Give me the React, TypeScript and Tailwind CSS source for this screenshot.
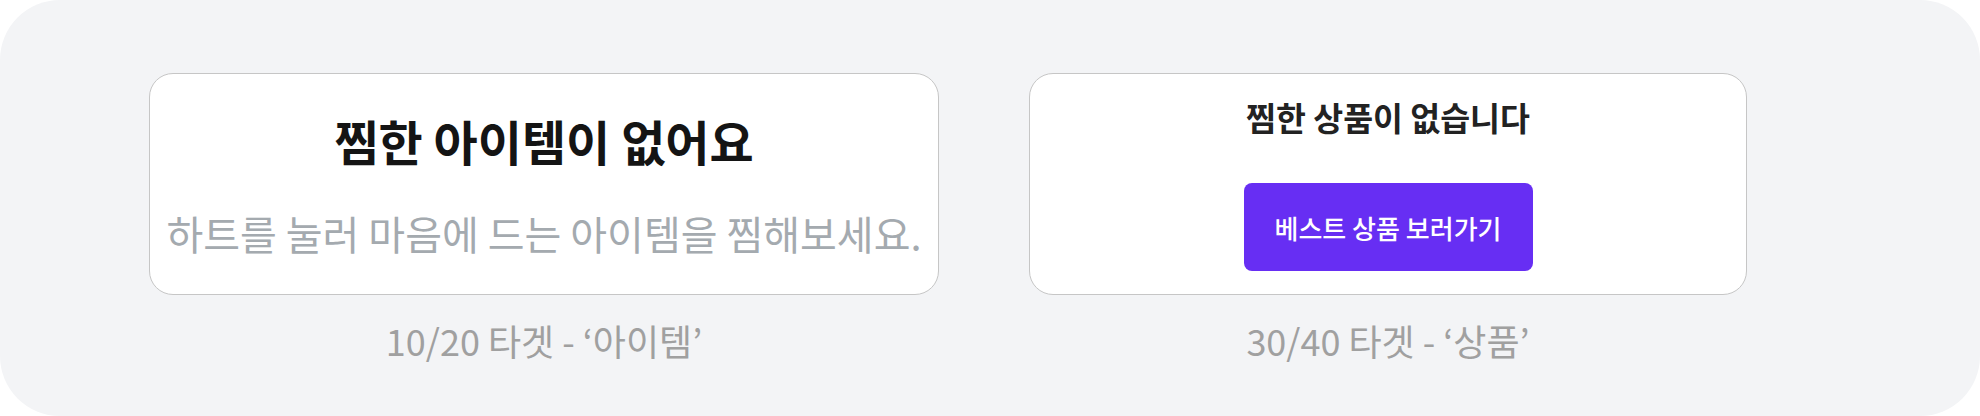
const font = "font-['Noto_Sans_CJK_KR','Noto_Sans',sans-serif]"

function Caption({ children }: { children: React.ReactNode }) {
  return (
    <p className="mt-[22px] text-center text-[36px] leading-[46px] text-[#a0a0a0] whitespace-nowrap">
      {children}
    </p>
  )
}

export default function App() {
  return (
    <div className={`w-[1980px] h-[416px] bg-white ${font}`}>
      <div className="h-full rounded-[60px] bg-[#f3f4f6] flex gap-[90px] pl-[149px] pt-[73px]">
        {/* 10/20 target */}
        <div className="w-[790px] flex flex-col">
          <div className="h-[222px] rounded-[24px] border-[1.5px] border-[#c6c6c6] bg-white flex flex-col items-center justify-center gap-[38px]">
            <h2 className="text-[48px] leading-[60px] font-bold text-[#141414] whitespace-nowrap">찜한 아이템이 없어요</h2>
            <p className="text-[40px] leading-[50px] text-[#a4aaaf] whitespace-nowrap">
              하트를 눌러 마음에 드는 아이템을 찜해보세요.
            </p>
          </div>
          <Caption>10/20 타겟 - ‘아이템’</Caption>
        </div>

        {/* 30/40 target */}
        <div className="w-[718px] flex flex-col">
          <div className="h-[222px] rounded-[24px] border-[1.5px] border-[#c6c6c6] bg-white flex flex-col items-center justify-center gap-[46px]">
            <h2 className="text-[32.5px] leading-[40px] font-semibold text-[#222222] whitespace-nowrap">찜한 상품이 없습니다</h2>
            <button className="w-[289px] h-[88px] rounded-[8px] bg-[#672ef3] text-white text-[26px] font-medium">
              베스트 상품 보러가기
            </button>
          </div>
          <Caption>30/40 타겟 - ‘상품’</Caption>
        </div>
      </div>
    </div>
  )
}
